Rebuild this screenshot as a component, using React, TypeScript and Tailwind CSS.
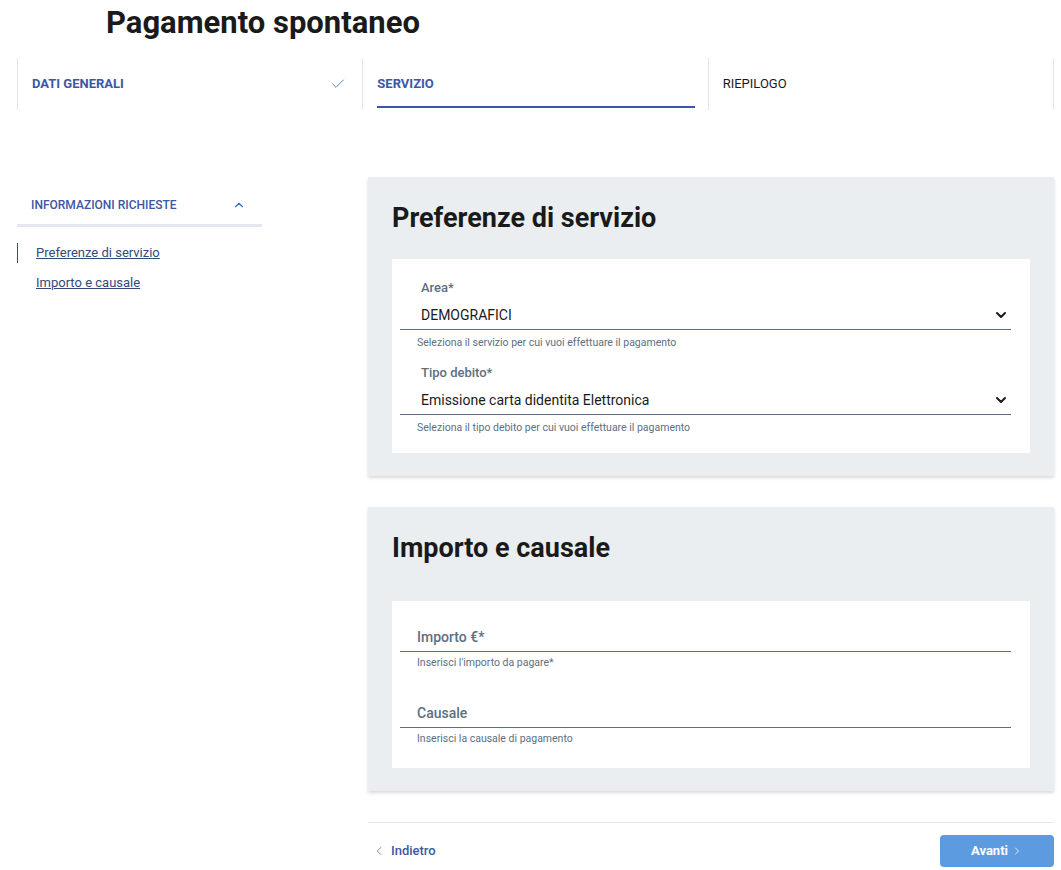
import { Check, ChevronUp, ChevronDown, ChevronLeft, ChevronRight } from 'lucide-react';

const font = { fontFamily: '"Roboto", "Liberation Sans", sans-serif' };

function Step({ label, state }: { label: string; state: 'done' | 'active' | 'todo' }) {
  return (
    <div className="relative flex h-[52px] flex-1 items-center border-l border-[#e3e4e8] px-[14px]">
      <span
        className={
          state === 'todo'
            ? 'text-[13px] text-[#1a1a1a]'
            : 'text-[13px] font-bold text-[#3a58a5]'
        }
      >
        {label}
      </span>
      {state === 'done' && <Check size={16} strokeWidth={1.5} className="ml-auto mr-[2px] text-[#5b7fc4]" />}
      {state === 'active' && <div className="absolute bottom-[2px] left-[14px] right-[13px] h-[2px] bg-[#3a58a5]" />}
    </div>
  );
}

function SelectField({ label, value, help }: { label: string; value: string; help: string }) {
  return (
    <div className="mb-[14px]">
      <div className="pl-[21px] text-[13px] font-medium leading-[18px] text-[#5c6f82]">{label}</div>
      <div className="mr-[19px] mt-[8px] flex items-center border-b border-[#5c6f82] pb-[4px] pl-[21px] pr-[2px]">
        <span className="text-[14px] leading-[20px] text-[#1a1a1a]">{value}</span>
        <ChevronDown size={16} strokeWidth={3} className="ml-auto text-[#1a1a1a]" />
      </div>
      <div className="mt-[6px] pl-[17px] text-[10.5px] leading-[14px] text-[#5c6f82]">{help}</div>
    </div>
  );
}

function InputField({ label, help }: { label: string; help: string }) {
  return (
    <div>
      <div className="mr-[19px] border-b border-[#5c6f82] pb-[5px] pl-[17px] text-[14px] font-medium leading-[18px] text-[#5c6f82]">
        {label}
      </div>
      <div className="mt-[4px] pl-[17px] text-[10.5px] leading-[14px] text-[#5c6f82]">{help}</div>
    </div>
  );
}

export default function App() {
  return (
    <div className="min-h-screen bg-white" style={font}>
      <h1 className="pl-[106px] pt-[3px] text-[31px] font-bold leading-[40px] text-[#1a1a1a]">
        Pagamento spontaneo
      </h1>

      <div className="ml-[17px] mr-[7px] mt-[15px] flex border-r border-[#e3e4e8]">
        <Step label="DATI GENERALI" state="done" />
        <Step label="SERVIZIO" state="active" />
        <Step label="RIEPILOGO" state="todo" />
      </div>

      <div className="mt-[67px] flex">
        <aside className="ml-[17px] w-[245px] pt-[19px]">
          <div className="flex items-center border-b-[3px] border-[#e6e6ee] pb-[10px] pl-[14px] pr-[16px]">
            <span className="text-[12px] font-medium text-[#3a58a5]">INFORMAZIONI RICHIESTE</span>
            <ChevronUp size={14} strokeWidth={2} className="ml-auto text-[#2f6fd6]" />
          </div>
          <nav className="mt-[16px] flex flex-col gap-[10px]">
            <a className="border-l border-[#3a4a7a] pl-[18px] text-[13px] leading-[20px] text-[#334a7a] underline">
              Preferenze di servizio
            </a>
            <a className="pl-[19px] text-[13px] leading-[20px] text-[#334a7a] underline">Importo e causale</a>
          </nav>
        </aside>

        <main className="ml-[106px] w-[686px]">
          <section className="bg-[#ebeef0] px-[24px] pb-[23px] pt-[24px] shadow-[0_2px_3px_rgba(0,0,0,0.15)]">
            <h2 className="text-[27px] font-bold leading-[34px] text-[#1a1a1a]">Preferenze di servizio</h2>
            <div className="mt-[24px] bg-white pb-[4px] pl-[8px] pt-[20px]">
              <SelectField
                label="Area*"
                value="DEMOGRAFICI"
                help="Seleziona il servizio per cui vuoi effettuare il pagamento"
              />
              <SelectField
                label="Tipo debito*"
                value="Emissione carta didentita Elettronica"
                help="Seleziona il tipo debito per cui vuoi effettuare il pagamento"
              />
            </div>
          </section>

          <section className="mt-[31px] bg-[#ebeef0] px-[24px] pb-[23px] pt-[24px] shadow-[0_2px_3px_rgba(0,0,0,0.15)]">
            <h2 className="text-[27px] font-bold leading-[34px] text-[#1a1a1a]">Importo e causale</h2>
            <div className="mt-[36px] flex flex-col gap-[34px] bg-white pb-[22px] pl-[8px] pt-[27px]">
              <InputField label="Importo €*" help="Inserisci l'importo da pagare*" />
              <InputField label="Causale" help="Inserisci la causale di pagamento" />
            </div>
          </section>

          <div className="mt-[31px] flex items-center border-t border-[#e8e8e8] pt-[12px]">
            <button className="flex items-center gap-[5px] pl-[4px] text-[13px] font-medium text-[#3a58a5]">
              <ChevronLeft size={14} strokeWidth={1.5} className="text-[#5b7fc4]" />
              Indietro
            </button>
            <button className="ml-auto flex h-[32px] w-[114px] items-center justify-center gap-[3px] rounded-[4px] bg-[#5c9be0] text-[13px] font-bold text-white">
              Avanti
              <ChevronRight size={12} strokeWidth={1.5} />
            </button>
          </div>
        </main>
      </div>
    </div>
  );
}
